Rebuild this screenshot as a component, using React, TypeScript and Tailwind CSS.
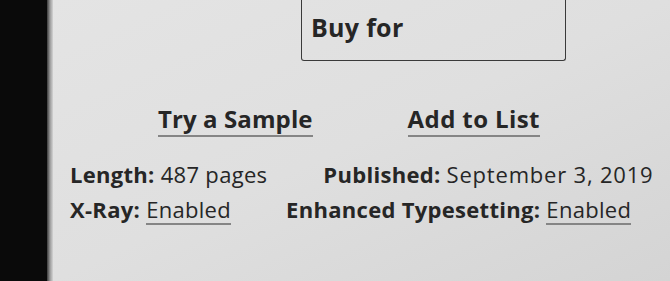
export default function App() {
  return (
    <div className="flex h-[281px] w-[670px] overflow-hidden bg-[#080808]">
      {/* bezel */}
      <div className="w-[47px] shrink-0 bg-[#0a0a0a]" />
      <div className="w-[6px] shrink-0 bg-gradient-to-r from-[#3c3c3c] via-[#9a9a9a] to-[#d4d4d4]" />

      {/* e-ink screen */}
      <div className="flex flex-1 flex-col bg-gradient-to-br from-[#e4e4e4] via-[#dfdfdf] to-[#d4d4d4] font-['Open_Sans',sans-serif] text-[#262626]">
        <div className="ml-[248px] h-[61px] w-[265px] shrink-0 rounded-b-[3px] border-x-[1.5px] border-b-[1.5px] border-[#3a3a3a] pl-[9px] pt-[15px]">
          <span className="block text-[25px] font-bold leading-[24px] tracking-[0.3px]">Buy for</span>
        </div>

        <div className="mt-[46px] flex items-start gap-[95px] pl-[105px] text-[24px] font-bold leading-[24px] tracking-[0.1px]">
          <span className="inline-block border-b-2 border-[#858585] pb-[4px]">Try a Sample</span>
          <span className="inline-block border-b-2 border-[#858585] pb-[4px] tracking-[0.4px]">Add to List</span>
        </div>

        <div className="mt-[26px] flex flex-col gap-[13px] pl-[17px] text-[22px] leading-[22px] tracking-[0.3px]">
          <div className="flex items-start gap-[56px]">
            <span>
              <span className="font-bold">Length:</span> 487 pages
            </span>
            <span>
              <span className="font-bold">Published:</span>{' '}
              <span className="tracking-[0.8px]">September 3, 2019</span>
            </span>
          </div>
          <div className="flex items-start gap-[55px]">
            <span className="flex items-start">
              <span className="font-bold">X-Ray:</span>
              <span className="ml-[6px] inline-block border-b-2 border-[#858585] pb-[3px]">Enabled</span>
            </span>
            <span className="flex items-start">
              <span className="font-bold">Enhanced Typesetting:</span>
              <span className="ml-[6px] inline-block border-b-2 border-[#858585] pb-[3px]">Enabled</span>
            </span>
          </div>
        </div>
      </div>
    </div>
  )
}
